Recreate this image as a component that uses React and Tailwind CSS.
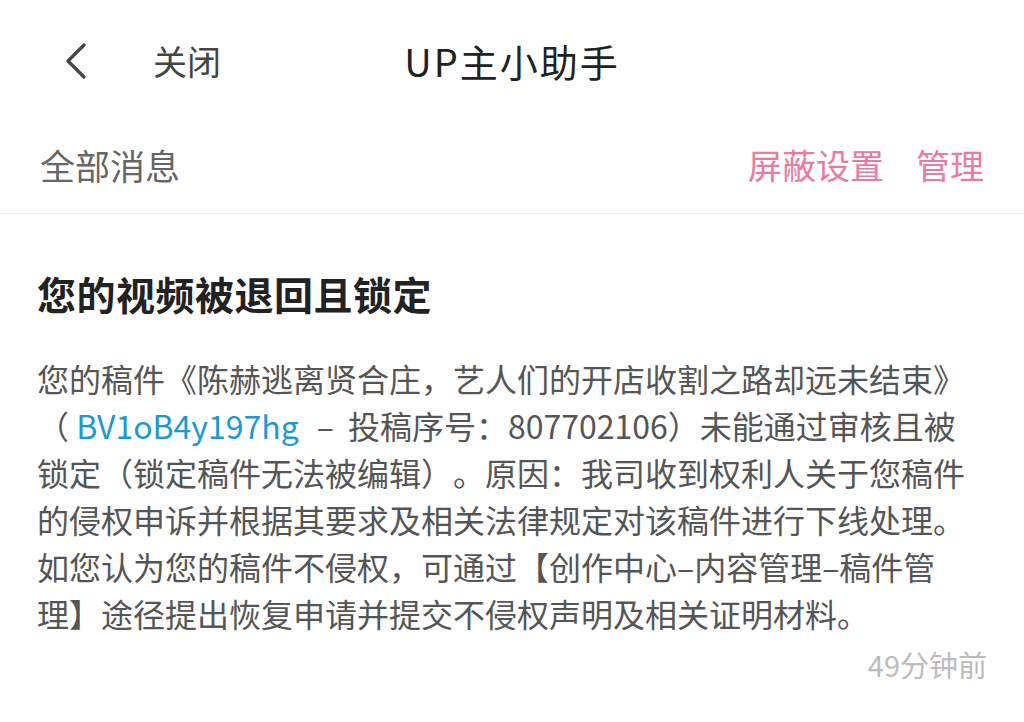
import React from "react"

const font = { fontFamily: '"Noto Sans CJK SC", "Noto Sans", sans-serif' }

const lines = [
  "锁定（锁定稿件无法被编辑）。原因：我司收到权利人关于您稿件",
  "的侵权申诉并根据其要求及相关法律规定对该稿件进行下线处理。",
  "如您认为您的稿件不侵权，可通过【创作中心–内容管理–稿件管",
  "理】途径提出恢复申请并提交不侵权声明及相关证明材料。",
]

const App = () => {
  return (
    <div className="w-[1024px] h-[722px] bg-white overflow-hidden [text-spacing-trim:space-all]" style={font}>
      {/* Top bar */}
      <header className="h-[126px] flex items-center relative pb-[4px]">
        <div className="flex items-center pl-[60px]">
          <svg width="30" height="40" viewBox="0 0 30 40" className="text-[#444]">
            <path d="M24 4 L8 20 L24 36" fill="none" stroke="currentColor" strokeWidth="3.2" strokeLinecap="round" strokeLinejoin="round" />
          </svg>
          <span className="ml-[63px] text-[34px] text-[#444] leading-none">关闭</span>
        </div>
        <h1 className="absolute left-0 right-0 text-center text-[38px] text-[#212121] leading-none tracking-[2px]">
          UP主小助手
        </h1>
      </header>

      {/* Filter row */}
      <div className="h-[88px] flex items-center justify-between pl-[40px] pr-[40px] border-b border-[#ececec] pb-[10px]">
        <span className="text-[35px] text-[#666] leading-none">全部消息</span>
        <div className="flex items-center gap-[32px] text-[34px] text-[#ea7a9e] leading-none">
          <span>屏蔽设置</span>
          <span>管理</span>
        </div>
      </div>

      {/* Message */}
      <section className="px-[37px] pt-[60px]">
        <h2 className="text-[39px] font-bold text-[#222] leading-none tracking-[0.5px]">您的视频被退回且锁定</h2>
        <div className="mt-[42px] text-[32px] leading-[47px] text-[#555] whitespace-nowrap">
          <div>您的稿件《陈赫逃离贤合庄，艺人们的开店收割之路却远未结束》</div>
          <div>
            <span>（ </span>
            <span className="text-[#1c9ad0]">BV1oB4y197hg</span>
            <span className="ml-[18px]">–</span>
            <span className="ml-[14px]">投稿序号：807702106）未能通过审核且被</span>
          </div>
          {lines.map((l) => (
            <div key={l}>{l}</div>
          ))}
        </div>
        <div className="flex justify-end mt-[13px]">
          <span className="text-[29px] text-[#bcbcbc] leading-none">49分钟前</span>
        </div>
      </section>
    </div>
  )
}

export default App
